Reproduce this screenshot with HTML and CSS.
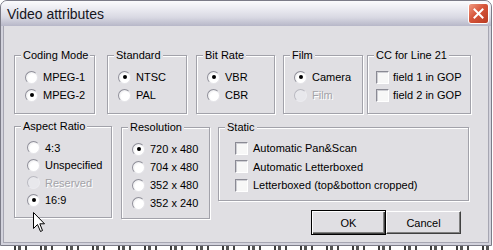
FILE: index.html
```html
<!DOCTYPE html>
<html>
<head>
<meta charset="utf-8">
<title>Video attributes</title>
<link rel="stylesheet" href="styles.css">
</head>
<body>
<div class="window">
  <div class="titlebar">
    <span class="title">Video attributes</span>
    <span class="close">
      <svg width="11" height="11" viewBox="0 0 11 11"><path d="M1.5 1.5 L9.5 9.5 M9.5 1.5 L1.5 9.5" stroke="#fff" stroke-width="2" stroke-linecap="square"/></svg>
    </span>
  </div>

  <div class="client">
    <div class="row top">
      <fieldset class="grp coding">
        <legend>Coding Mode</legend>
        <div class="opts">
          <div class="opt"><span class="radio"></span>MPEG-1</div>
          <div class="opt"><span class="radio on"></span>MPEG-2</div>
        </div>
      </fieldset>
      <fieldset class="grp standard">
        <legend>Standard</legend>
        <div class="opts">
          <div class="opt"><span class="radio on"></span>NTSC</div>
          <div class="opt"><span class="radio"></span>PAL</div>
        </div>
      </fieldset>
      <fieldset class="grp bitrate">
        <legend>Bit Rate</legend>
        <div class="opts">
          <div class="opt"><span class="radio on"></span>VBR</div>
          <div class="opt"><span class="radio"></span>CBR</div>
        </div>
      </fieldset>
      <fieldset class="grp film">
        <legend>Film</legend>
        <div class="opts">
          <div class="opt"><span class="radio on"></span>Camera</div>
          <div class="opt off"><span class="radio"></span>Film</div>
        </div>
      </fieldset>
      <fieldset class="grp cc">
        <legend>CC for Line 21</legend>
        <div class="opts">
          <div class="opt"><span class="check"></span>field 1 in GOP</div>
          <div class="opt"><span class="check"></span>field 2 in GOP</div>
        </div>
      </fieldset>
    </div>

    <div class="row bottom">
      <fieldset class="grp aspect">
        <legend>Aspect Ratio</legend>
        <div class="opts">
          <div class="opt"><span class="radio"></span>4:3</div>
          <div class="opt"><span class="radio"></span>Unspecified</div>
          <div class="opt off"><span class="radio"></span>Reserved</div>
          <div class="opt"><span class="radio on"></span>16:9</div>
        </div>
      </fieldset>
      <fieldset class="grp resolution">
        <legend>Resolution</legend>
        <div class="opts">
          <div class="opt"><span class="radio on"></span>720 x 480</div>
          <div class="opt"><span class="radio"></span>704 x 480</div>
          <div class="opt"><span class="radio"></span>352 x 480</div>
          <div class="opt"><span class="radio"></span>352 x 240</div>
        </div>
      </fieldset>
      <div class="side">
        <fieldset class="grp static">
          <legend>Static</legend>
          <div class="opts">
            <div class="opt"><span class="check"></span>Automatic Pan&amp;Scan</div>
            <div class="opt"><span class="check"></span>Automatic Letterboxed</div>
            <div class="opt"><span class="check"></span>Letterboxed (top&amp;botton cropped)</div>
          </div>
        </fieldset>
        <div class="buttons">
          <button class="btn default">OK</button>
          <button class="btn">Cancel</button>
        </div>
      </div>
    </div>
  </div>

  <svg class="cursor" width="13" height="21" viewBox="0 0 13 21"><path d="M0.5 0.5 L0.5 16.5 L4.5 12.5 L7.5 19.5 L9.5 18.5 L6.8 11.8 L11.5 11.8 Z" fill="#fff" stroke="#000" stroke-width="1" stroke-linejoin="miter"/></svg>
</div>
<div class="desk"></div>
</body>
</html>
```

FILE: styles.css
```css
html, body {
  margin: 0;
  background: #fff;
}

body {
  width: 493px;
  height: 250px;
  overflow: hidden;
  font: 11px "Liberation Sans", Arial, sans-serif;
  color: #000;
}

/* window frame */
.window {
  position: relative;
  width: 492px;
  height: 246px;
  box-sizing: border-box;
  border: 1px solid #7c7c88;
  border-radius: 7px 7px 0 0;
  background: #d2d2dc;
  padding: 0 2px 2px;
  display: flex;
  flex-direction: column;
}

.titlebar {
  height: 25px;
  margin: 0 -2px;
  padding: 0 2px 0 6px;
  display: flex;
  align-items: center;
  border-radius: 6px 6px 0 0;
  background: linear-gradient(#fbfbfd, #ececf2 30%, #d9d9e3 65%, #b7b7c8);
}

.title {
  flex: 1;
  font-size: 14px;
  color: #15151c;
}

.close {
  width: 21px;
  height: 21px;
  box-sizing: border-box;
  border: 1px solid #fff;
  border-radius: 3px;
  background: linear-gradient(135deg, #f19a82, #d6553a 45%, #b93a22);
  display: flex;
  align-items: center;
  justify-content: center;
}

.client {
  flex: 1;
  background: #e0dfe3;
  border: 1px solid #a6a6b2;
  border-top: none;
}

/* group boxes */
.row {
  display: flex;
  align-items: flex-start;
  padding-left: 10px;
}

.row.top { margin-top: 23px; }
.row.bottom { margin-top: 6px; }

.grp {
  margin: 0;
  padding: 0;
  min-width: 0;
  box-sizing: border-box;
  border: 1px solid #a2a2aa;
  box-shadow: inset 1px 1px #fff, 1px 1px #fff;
}

.grp legend {
  margin-left: 6px;
  padding: 0 2px;
  line-height: 13px;
  background: #e0dfe3;
}

.opts { padding: 6px 0 0 10px; }

.opt {
  height: 18px;
  display: flex;
  align-items: center;
  gap: 5px;
  white-space: nowrap;
}

.opt.off {
  color: #a3a3a8;
  text-shadow: 1px 1px #fff;
}

.top .grp { height: 65px; }
.coding { width: 81px; }
.standard { width: 80px; margin-left: 12px; }
.bitrate { width: 79px; margin-left: 9px; }
.film { width: 80px; margin-left: 8px; }
.cc { width: 104px; margin-left: 4px; }
.cc .opts { padding-left: 8px; }
.cc .opt { gap: 4px; }

.aspect { width: 98px; height: 98px; }
.aspect .opts { padding-left: 12px; }
.aspect .opt { height: 17.5px; }
.resolution { width: 89px; height: 98px; margin: 1px 0 0 9px; }
.side { margin: 1px 0 0 8px; width: 251px; }
.static { width: 251px; height: 80px; }
.static .opts { padding: 5px 0 0 16px; }
.static .opt { height: 18.5px; }

/* controls */
.radio {
  position: relative;
  width: 13px;
  height: 13px;
  box-sizing: border-box;
  flex: none;
  border-radius: 50%;
  border: 1px solid;
  border-color: #8f8f99 #e6e6ea #e6e6ea #8f8f99;
  background: radial-gradient(circle at 60% 60%, #fff 45%, #dcdce0);
}

.radio.on::after {
  content: "";
  position: absolute;
  left: 3.5px;
  top: 3.5px;
  width: 4px;
  height: 4px;
  border-radius: 50%;
  background: #000;
}

.off .radio {
  border-color: #b8b8c0 #ececf0 #ececf0 #b8b8c0;
  background: #e8e8ec;
}

.check {
  width: 13px;
  height: 13px;
  box-sizing: border-box;
  flex: none;
  border: 1px solid;
  border-color: #8a8a94 #fff #fff #8a8a94;
  background: #f7f7f7;
  box-shadow: inset 1px 1px #cfcfd4;
}

.buttons {
  display: flex;
  align-items: center;
  justify-content: flex-end;
  padding-right: 8px;
  margin-top: 9px;
}

.btn {
  width: 75px;
  height: 23px;
  box-sizing: border-box;
  margin: 0;
  padding: 0;
  font: 11px "Liberation Sans", Arial, sans-serif;
  color: #000;
  background: #e0dfe3;
  border: 1px solid;
  border-color: #fff #404040 #404040 #fff;
  box-shadow: inset -1px -1px #808080;
}

.btn.default {
  height: 25px;
  border-color: #000;
  box-shadow: inset 1px 1px #fff, inset -1px -1px #404040, inset -2px -2px #808080;
}

.cursor {
  position: absolute;
  left: 32px;
  top: 211px;
}

/* what shows of the window behind */
.desk {
  height: 4px;
  margin: 0 0 0 14px;
  background: repeating-linear-gradient(90deg, #3a3a3a 0 2px, #fff 2px 4px, #555 4px 7px, #fff 7px 11px, #444 11px 13px, #fff 13px 26px);
}
```
